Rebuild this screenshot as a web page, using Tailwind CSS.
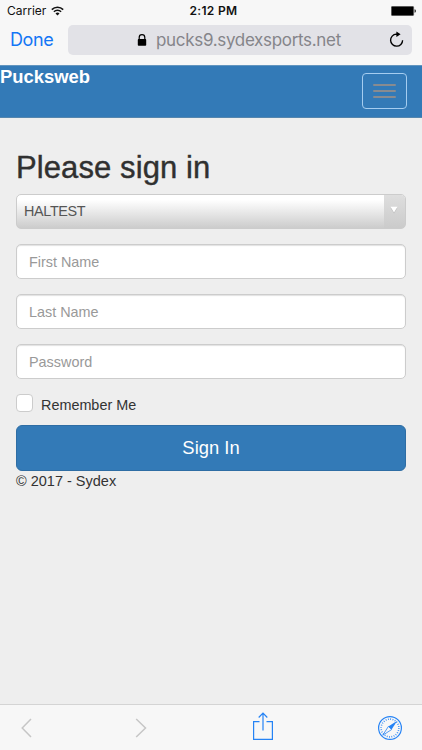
<!DOCTYPE html>
<html lang="en">
<head>
<meta charset="utf-8">
<meta name="viewport" content="width=device-width, initial-scale=1">
<title>Pucksweb</title>
<script src="https://cdn.jsdelivr.net/npm/@tailwindcss/browser@4"></script>
</head>
<body class="bg-[#eeeeee]">
<div class="flex flex-col w-[422px] h-[750px] overflow-hidden bg-[#eeeeee] font-['Liberation_Sans',Arial,sans-serif] text-[#333333]">
  <header class="h-[65px] shrink-0 bg-[#f7f7f7] font-['Inter',sans-serif]">
    <div class="grid grid-cols-3 items-center h-[22px] pl-[7px] pr-[6px] text-[12px] leading-[22px] text-[#111111]">
      <div class="flex items-center gap-[5px]">
        <span>Carrier</span>
        <svg class="w-[13px] h-[10px] mb-px" viewBox="0 0 13 10" fill="none" stroke="#111" stroke-width="1.6">
          <path d="M.8 3.6a8.1 8.1 0 0 1 11.4 0M2.9 5.7a5.1 5.1 0 0 1 7.2 0"/>
          <path d="M4.5 7.4a2.9 2.9 0 0 1 4 0L6.5 9.5z" fill="#111" stroke="none"/>
        </svg>
      </div>
      <span class="text-center font-semibold whitespace-nowrap tracking-[0.3px] pl-[4px]">2:12 PM</span>
      <svg class="justify-self-end w-[25px] h-[10px] mb-px" viewBox="0 0 25 10">
        <rect x=".25" y=".25" width="22.5" height="9.5" rx="1.2" fill="#000" stroke="#888" stroke-width=".5"/>
        <path d="M23.6 3.2q1.2.3 1.2 1.8t-1.2 1.8z" fill="#000"/>
      </svg>
    </div>
    <div class="flex items-center pl-[10px] pr-[10px] pt-[3px]">
      <span class="w-[58px] text-[18px] leading-[30px] tracking-[-0.4px] text-[#1476f5]">Done</span>
      <div class="flex flex-1 items-center h-[30px] rounded-[5px] bg-[#e2e2e7] pl-[69px] pr-[8px]">
        <svg class="w-[10px] h-[12px] mr-[9px]" viewBox="0 0 10 12">
          <path d="M2.2 6V3.5a2.8 2.8 0 0 1 5.6 0V6" fill="none" stroke="#000" stroke-width="1.2"/>
          <rect x=".8" y="5.1" width="8.4" height="6.6" rx=".8" fill="#000"/>
        </svg>
        <span class="flex-1 text-[17px] leading-[30px] tracking-[-0.32px] whitespace-nowrap text-[#85858a]">pucks9.sydexsports.net</span>
        <svg class="w-[15px] h-[17px] mb-[2px]" viewBox="0 0 15 17">
          <path d="M8.7 3.2H7.3a6 6 0 1 0 6.3 6" fill="none" stroke="#000" stroke-width="1.35"/>
          <path d="M7.4.5 11.6 3.3 7.4 6z" fill="#000"/>
        </svg>
      </div>
    </div>
  </header>

  <nav class="flex justify-between h-[53px] shrink-0 bg-[#337ab7] border-y border-t-[#6295bf] border-b-[#5586ae] pr-[15px]">
    <span class="text-[18.4px] leading-[22px] font-bold text-white">Pucksweb</span>
    <button class="flex flex-col items-center justify-center gap-[4px] w-[45px] h-[36px] mt-[7px] rounded-[4px] border border-[#a5cdf0]" aria-label="Menu">
      <span class="w-[23px] h-[2px] rounded-full bg-[#888b90]"></span>
      <span class="w-[23px] h-[2px] rounded-full bg-[#888b90]"></span>
      <span class="w-[23px] h-[2px] rounded-full bg-[#888b90]"></span>
    </button>
  </nav>

  <main class="flex flex-col flex-1 px-[16px] pt-[32px]">
    <h2 class="text-[31px] leading-[36px] tracking-[0.1px] font-medium text-[#303030] [-webkit-text-stroke:0.4px_#303030]">Please sign in</h2>
    <div class="flex h-[35px] mt-[8px] w-[390px] rounded-[5px] border border-[#cccccc] overflow-hidden bg-linear-to-b from-white from-15% to-[#cccccc]">
      <span class="flex-1 pl-[7px] text-[14.4px] leading-[33px] tracking-[-0.35px] text-[#555555]">HALTEST</span>
      <span class="flex justify-center w-[21px] bg-linear-to-b from-[#dedede] to-[#cbcbcb]">
        <svg class="w-[8px] h-[8px] mt-[11px] mr-px" viewBox="0 0 8 8"><path d="M.5 1.8h7L4 7.6z" fill="#bbb"/><path d="M.5.7h7L4 6.5z" fill="#fff"/></svg>
      </span>
    </div>
    <input class="block h-[35px] mt-[15px] w-[390px] rounded-[5px] border border-[#cccccc] bg-white px-[12px] text-[14.4px] shadow-[inset_0_1px_1px_rgba(0,0,0,0.12)] placeholder:text-[#999999]" placeholder="First Name">
    <input class="block h-[35px] mt-[15px] w-[390px] rounded-[5px] border border-[#cccccc] bg-white px-[12px] text-[14.4px] shadow-[inset_0_1px_1px_rgba(0,0,0,0.12)] placeholder:text-[#999999]" placeholder="Last Name">
    <input class="block h-[35px] mt-[15px] w-[390px] rounded-[5px] border border-[#cccccc] bg-white px-[12px] text-[14.4px] shadow-[inset_0_1px_1px_rgba(0,0,0,0.12)] placeholder:text-[#999999]" placeholder="Password">
    <label class="flex gap-[8px] mt-[15px] h-[18px] text-[14.4px] leading-[22px]">
      <input type="checkbox" class="appearance-none w-[17px] h-[18px] rounded-[4px] border border-[#cccccc] bg-white">
      <span>Remember Me</span>
    </label>
    <button class="h-[46px] w-[390px] mt-[13px] shrink-0 rounded-[6px] border border-[#2e6da4] bg-[#337ab7] text-[18.4px] leading-[44px] text-white">Sign In</button>
    <p class="text-[14.5px] leading-[20px]">© 2017 - Sydex</p>
  </main>

  <footer class="flex items-center h-[46px] shrink-0 border-t border-[#d4d4d4] bg-[#f7f7f7]">
    <svg class="w-[12px] h-[20px] ml-[21px]" viewBox="0 0 12 20" fill="none" stroke="#c6c6c6" stroke-width="1.5"><path d="M10 1 1.2 10 10 19"/></svg>
    <svg class="w-[12px] h-[20px] ml-[102px]" viewBox="0 0 12 20" fill="none" stroke="#c6c6c6" stroke-width="1.5"><path d="M1.2 1 10.5 10l-9.3 9"/></svg>
    <svg class="w-[22px] h-[30px] ml-[105px] mb-[3px]" viewBox="0 0 22 30" fill="none" stroke="#2583f5" stroke-width="1.2"><path d="M7.5 10.6H1.6v17.8h18.8V10.6h-5.9M11 19.5V2.2M6.7 6.5 11 2.2l4.3 4.3"/></svg>
    <svg class="w-[26px] h-[26px] ml-[103px]" viewBox="0 0 26 26" fill="none" stroke="#2583f5">
      <circle cx="13" cy="13" r="11.4" stroke-width="1.2"/>
      <circle cx="13" cy="13" r="8.9" stroke-width="1.6" stroke-dasharray=".8 1.53"/>
      <path d="M20.2 5.8 14.6 14.6 11.4 11.4z" fill="#2583f5" stroke="none"/>
      <path d="M11.4 11.4 5.8 20.2l8.8-5.6z" fill="#f7f7f7" stroke-width=".8"/>
    </svg>
  </footer>
</div>
</body>
</html>
